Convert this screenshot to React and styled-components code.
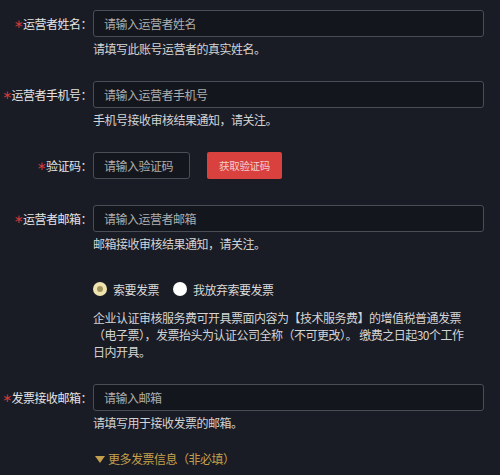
import React from "react";
import styled, { createGlobalStyle } from "styled-components";

const Global = createGlobalStyle`
  html, body { margin: 0; padding: 0; background: #191b25; }
  body { font-family: "Noto Sans CJK SC", "Noto Sans", sans-serif; }
`;

const Page = styled.div`
  width: 500px;
  height: 475px;
  box-sizing: border-box;
  padding: 10px 16px 0 0;
  background: #191b25;
  font-size: 12px;
  letter-spacing: -0.5px;
  color: #d6d6d6;
  overflow: hidden;
`;

const Field = styled.div`
  display: grid;
  grid-template-columns: 93px 1fr;
  margin-bottom: ${(p) => p.$mb || 0}px;
`;

const Label = styled.label`
  height: 27px;
  display: flex;
  align-items: center;
  justify-content: flex-end;
  color: #e4e4e4;
  white-space: nowrap;
  padding-right: 1px;
`;

const Star = styled.span`
  color: #cf3a3a;
  font-family: "DejaVu Sans", sans-serif;
  font-size: 12px;
  line-height: 1;
  margin-right: 0px;
`;

const Controls = styled.div`
  display: flex;
  flex-direction: column;
  grid-column: 2;
`;

const InputRow = styled.div`
  display: flex;
  align-items: center;
  gap: 17px;
`;

const Input = styled.input`
  box-sizing: border-box;
  height: 27px;
  width: ${(p) => p.$w || "100%"};
  background: #14161e;
  border: 1px solid #4a4c56;
  border-radius: 3px;
  padding: 0 10px;
  font-family: inherit;
  font-size: 12px;
  letter-spacing: -0.5px;
  color: #e0e0e0;
  outline: none;
  &::placeholder { color: #adadad; }
`;

const Button = styled.button`
  box-sizing: border-box;
  height: 27px;
  width: 75px;
  border: none;
  border-radius: 2px;
  background: #d8413d;
  color: #f5cccb;
  font-family: inherit;
  font-size: 10.5px;
  letter-spacing: -0.3px;
  padding: 0;
`;

const Help = styled.div`
  margin-top: 4px;
  line-height: 16px;
  color: #d4d4d4;
`;

const RadioGroup = styled.div`
  display: flex;
  align-items: center;
  height: 16px;
  gap: 14px;
`;

const RadioItem = styled.div`
  display: flex;
  align-items: center;
  gap: 6px;
  color: #dadada;
`;

const RadioDot = styled.span`
  width: 14px;
  height: 14px;
  border-radius: 50%;
  background: ${(p) => (p.$checked ? "#efe4b0" : "#ffffff")};
  display: flex;
  align-items: center;
  justify-content: center;
  &::after {
    content: "";
    width: 6px;
    height: 6px;
    border-radius: 50%;
    background: ${(p) => (p.$checked ? "#a2945a" : "transparent")};
  }
`;

const Para = styled.p`
  margin: 12px 0 0;
  line-height: 17px;
  color: #d4d4d4;
`;

const Fold = styled.div`
  display: flex;
  align-items: center;
  gap: 3px;
  line-height: 16px;
  color: #c4a04c;
  padding-left: 2px;
`;

const Arrow = styled.svg`
  width: 10px;
  height: 8px;
  margin-top: 1px;
`;

export default function App() {
  return (
    <Page>
      <Global />
      <Field $mb={24}>
        <Label><Star>∗</Star>运营者姓名：</Label>
        <Controls>
          <Input placeholder="请输入运营者姓名" />
          <Help>请填写此账号运营者的真实姓名。</Help>
        </Controls>
      </Field>
      <Field $mb={24}>
        <Label><Star>∗</Star>运营者手机号：</Label>
        <Controls>
          <Input placeholder="请输入运营者手机号" />
          <Help>手机号接收审核结果通知，请关注。</Help>
        </Controls>
      </Field>
      <Field $mb={26}>
        <Label><Star>∗</Star>验证码：</Label>
        <Controls>
          <InputRow>
            <Input $w="97px" placeholder="请输入验证码" />
            <Button type="button">获取验证码</Button>
          </InputRow>
        </Controls>
      </Field>
      <Field $mb={29}>
        <Label><Star>∗</Star>运营者邮箱：</Label>
        <Controls>
          <Input placeholder="请输入运营者邮箱" />
          <Help>邮箱接收审核结果通知，请关注。</Help>
        </Controls>
      </Field>
      <Field $mb={24}>
        <Controls>
          <RadioGroup>
            <RadioItem><RadioDot $checked />索要发票</RadioItem>
            <RadioItem><RadioDot />我放弃索要发票</RadioItem>
          </RadioGroup>
          <Para>
            企业认证审核服务费可开具票面内容为【技术服务费】的增值税普通发票
            <br />
            （电子票），发票抬头为认证公司全称（不可更改）。 缴费之日起30个工作
            <br />
            日内开具。
          </Para>
        </Controls>
      </Field>
      <Field $mb={20}>
        <Label><Star>∗</Star>发票接收邮箱：</Label>
        <Controls>
          <Input placeholder="请输入邮箱" />
          <Help>请填写用于接收发票的邮箱。</Help>
        </Controls>
      </Field>
      <Field>
        <Controls>
          <Fold>
            <Arrow viewBox="0 0 10 8">
              <path d="M0 0 L10 0 L5 7 Z" fill="#c4a04c" />
            </Arrow>
            更多发票信息（非必填）
          </Fold>
        </Controls>
      </Field>
    </Page>
  );
}
